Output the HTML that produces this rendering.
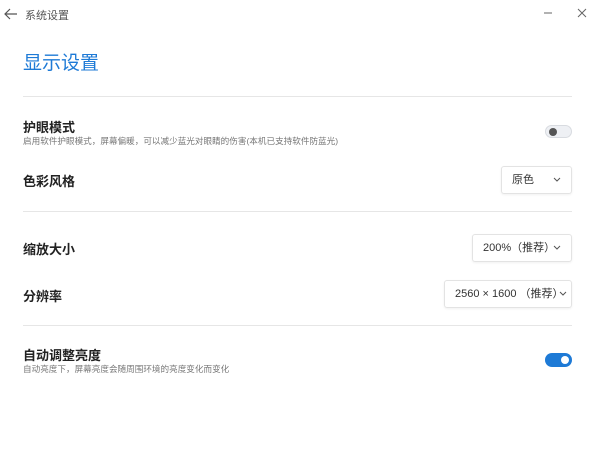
<!DOCTYPE html><html><head><style>
body{margin:0;width:600px;height:455px;background:#fff;font-family:"Liberation Sans","Noto Sans CJK SC",sans-serif;position:relative;overflow:hidden}
.a{position:absolute;white-space:nowrap}
.hr{position:absolute;left:23px;width:549px;height:1px;background:#e6e6e6}
.t{font-size:13px;font-weight:bold;color:#222}
.s{font-size:8.6px;color:#777}
.dd{position:absolute;border:1px solid #e3e3e3;border-radius:3px;box-shadow:0 1px 2px rgba(0,0,0,.06);font-size:11px;color:#333;box-sizing:border-box;height:28px;line-height:26px;padding-left:10px}
.dd svg{position:absolute;right:10px;top:10px}
</style></head><body>
<svg class="a" style="left:4px;top:7px" width="14" height="14" viewBox="0 0 14 14"><path d="M13 7H1M6 2L1 7l5 5" stroke="#555" stroke-width="1.2" fill="none"/></svg>
<div class="a" style="left:25px;top:7px;font-size:11px;color:#555">系统设置</div>
<svg class="a" style="left:543px;top:8px" width="10" height="10"><path d="M1 5h8" stroke="#666"/></svg>
<svg class="a" style="left:577px;top:8px" width="10" height="10"><path d="M1 1l8 8M9 1l-8 8" stroke="#666"/></svg>
<div class="a" style="left:23px;top:48px;font-size:19px;color:#1e7ad6">显示设置</div>
<div class="hr" style="top:96px"></div>
<div class="a t" style="left:23px;top:117px">护眼模式</div>
<div class="a s" style="left:23px;top:135px">启用软件护眼模式，屏幕偏暖，可以减少蓝光对眼睛的伤害(本机已支持软件防蓝光)</div>
<div class="a" style="left:545px;top:125px;width:27px;height:13px;border-radius:7px;background:#eef0f4;border:1px solid #d8dbe0;box-sizing:border-box"><div style="position:absolute;left:3px;top:2px;width:8px;height:8px;border-radius:50%;background:#555"></div></div>
<div class="a t" style="left:23px;top:171px">色彩风格</div>
<div class="dd" style="left:501px;top:166px;width:71px">原色<svg width="8" height="6"><path d="M1 1l3 3 3-3" stroke="#555" fill="none"/></svg></div>
<div class="hr" style="top:211px"></div>
<div class="a t" style="left:23px;top:239px">缩放大小</div>
<div class="dd" style="left:472px;top:234px;width:100px">200%（推荐）<svg width="8" height="6"><path d="M1 1l3 3 3-3" stroke="#555" fill="none"/></svg></div>
<div class="a t" style="left:23px;top:286px">分辨率</div>
<div class="dd" style="left:444px;top:280px;width:128px">2560 × 1600 （推荐）<svg width="8" height="6" style="right:4px"><path d="M1 1l3 3 3-3" stroke="#555" fill="none"/></svg></div>
<div class="hr" style="top:325px"></div>
<div class="a t" style="left:23px;top:345px">自动调整亮度</div>
<div class="a s" style="left:23px;top:363px">自动亮度下，屏幕亮度会随周围环境的亮度变化而变化</div>
<div class="a" style="left:545px;top:353px;width:27px;height:14px;border-radius:7px;background:#1e7ad6"><div style="position:absolute;right:3px;top:3px;width:8px;height:8px;border-radius:50%;background:#fff"></div></div>
</body></html>
